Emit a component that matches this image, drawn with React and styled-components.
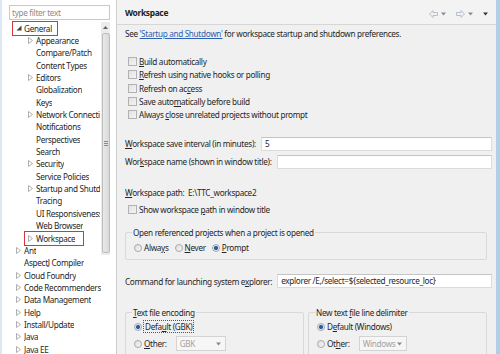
import React from 'react';
import styled, { createGlobalStyle } from 'styled-components';

const Global = createGlobalStyle`
  html, body { margin: 0; padding: 0; }
  body {
    width: 500px; height: 354px; overflow: hidden; background: #fff;
    font-family: "Noto Sans", "Open Sans", sans-serif;
  }
`;

const Window = styled.div`
  display: flex;
  width: 500px;
  height: 354px;
  overflow: hidden;
  font-size: 8.2px;
  letter-spacing: -0.32px;
  color: #262626;
`;

/* ---------- left tree ---------- */
const Sidebar = styled.div`
  width: 114px;
  flex: none;
  background: #fff;
  border-left: 2px solid #dde8f4;
  border-right: 1px solid #cdcdcd;
  display: flex;
  flex-direction: column;
`;

const Filter = styled.div`
  margin: 5px 0 0 7px;
  width: 101px;
  height: 15px;
  box-sizing: border-box;
  border: 1px solid #c9c9c9;
  color: #8c8c8c;
  padding-left: 2px;
  line-height: 13px;
`;

const TreeArea = styled.div`
  position: relative;
  margin-top: 2px;
  flex: 1;
`;

const Row = styled.div`
  height: 12.35px;
  display: flex;
  align-items: center;
  padding-left: ${p => (p.$level ? 26 : 14)}px;
  white-space: nowrap;
`;

const Slot = styled.span`
  width: 8px;
  flex: none;
  display: inline-flex;
  align-items: center;
`;

const Label = styled.span`
  display: inline-block;
  overflow: hidden;
  white-space: nowrap;
  max-width: ${p => (p.$clip ? '64px' : 'none')};
`;

const Marked = styled.span`
  position: relative;
  display: inline-flex;
  align-items: center;
  &::before {
    content: '';
    position: absolute;
    left: ${p => p.$l}px;
    right: ${p => p.$r}px;
    top: -2px;
    bottom: -2px;
    border: 1.5px solid #d9343c;
  }
`;

const Scrollbar = styled.div`
  position: absolute;
  left: 99px;
  top: 0;
  width: 9px;
  height: 233px;
  background: #ececec;
  display: flex;
  flex-direction: column;
  align-items: center;
`;

const ScrollBtn = styled.div`
  height: 11px;
  display: flex;
  align-items: center;
  justify-content: center;
`;

const Thumb = styled.div`
  width: 8px;
  flex: 1;
  margin-bottom: 2px;
  box-sizing: border-box;
  border: 1px solid #bcbcbc;
  border-radius: 2px;
  background: linear-gradient(to right, #e9e9e9, #d9d9d9);
  display: flex;
  align-items: center;
  justify-content: center;
`;

const Grip = styled.div`
  width: 4px;
  height: 5px;
  background: repeating-linear-gradient(to bottom, #8a8a8a 0 1px, transparent 1px 2px);
`;

const Collapsed = () => (
  <svg width="5" height="7" viewBox="0 0 5 7">
    <polygon points="0.5,0.5 4.5,3.5 0.5,6.5" fill="#fff" stroke="#a6a6a6" strokeWidth="0.9" />
  </svg>
);
const Expanded = () => (
  <svg width="6" height="6" viewBox="0 0 6 6">
    <polygon points="5.5,0.5 5.5,5.5 0.5,5.5" fill="#404040" />
  </svg>
);

/* ---------- right page ---------- */
const Main = styled.div`
  flex: 1;
  background: #f0f0f0;
  border-right: 4px solid #b4cde8;
  display: flex;
  flex-direction: column;
  min-width: 0;
`;

const Header = styled.div`
  height: 24px;
  flex: none;
  display: flex;
  align-items: center;
  justify-content: space-between;
  padding: 0 8px 0 8px;
  border-bottom: 1px solid #d6d6d6;
  background: #f3f3f3;
`;

const Title = styled.div`
  font-weight: bold;
  font-size: 8.4px;
  color: #222;
`;

const Nav = styled.div`
  display: flex;
  align-items: center;
  gap: 3px;
  margin-top: 4px;
`;

const Body = styled.div`
  padding: 0 4px 0 8px;
  display: flex;
  flex-direction: column;
`;

const Line = styled.div`
  line-height: 13px;
  height: 13px;
  white-space: nowrap;
  margin-top: ${p => p.$mt || 0}px;
`;

const Link = styled.span`
  color: #2d62b3;
  text-decoration: underline;
`;

const U = styled.span`
  text-decoration: underline;
`;

const CheckRow = styled.div`
  display: flex;
  align-items: center;
  height: 13.3px;
  margin-top: ${p => p.$mt || 0}px;
  padding-left: 3px;
  gap: 2px;
  white-space: nowrap;
`;

const Box = styled.span`
  width: 9px;
  height: 9px;
  box-sizing: border-box;
  border: 1px solid #b2b2b2;
  background: linear-gradient(135deg, #e2e2e2, #f4f4f4);
  flex: none;
`;

const FieldRow = styled.div`
  display: flex;
  align-items: center;
  gap: 5px;
  height: 15px;
  margin-top: ${p => p.$mt || 0}px;
  white-space: nowrap;
`;

const Input = styled.div`
  flex: 1;
  height: 14px;
  box-sizing: border-box;
  background: #fff;
  border: 1px solid #dcdcdc;
  border-top-color: #c4c4c4;
  padding-left: 3px;
  line-height: 12px;
  overflow: hidden;
  white-space: nowrap;
`;

const Group = styled.fieldset`
  margin: ${p => p.$mt || 0}px ${p => p.$mr || 0}px 0 0;
  padding: 0 0 0 8px;
  border: 1px solid #d9d9d9;
  border-radius: 2px;
  min-width: 0;
  flex: ${p => (p.$flex ? 1 : 'none')};
  height: ${p => p.$h}px;
  box-sizing: border-box;
`;

const Legend = styled.legend`
  padding: 0 1px;
  margin-left: -2px;
  line-height: 13px;
  white-space: nowrap;
`;

const RadioLine = styled.div`
  display: flex;
  align-items: center;
  height: ${p => p.$h || 15}px;
  gap: 6px;
  white-space: nowrap;
`;

const RadioItem = styled.span`
  display: inline-flex;
  align-items: center;
  gap: 2px;
`;

const Radio = styled.span`
  width: 8px;
  height: 8px;
  border-radius: 50%;
  box-sizing: border-box;
  border: 1px solid #a9a9a9;
  background: ${p =>
    p.$on
      ? 'radial-gradient(circle, #2d5f9e 0 1.8px, #dfe8f2 2.3px)'
      : 'linear-gradient(135deg, #dedede, #f6f6f6)'};
  flex: none;
`;

const Focus = styled.span`
  outline: 1px dotted #555;
  outline-offset: 0px;
  padding: 0 1px;
`;

const Combo = styled.span`
  display: inline-flex;
  align-items: center;
  justify-content: space-between;
  width: ${p => p.$w}px;
  height: 15px;
  box-sizing: border-box;
  border: 1px solid #d3d3d3;
  background: #f6f6f6;
  color: #a2a2a2;
  padding: 0 4px 0 3px;
  margin-left: 3px;
`;

const BottomGroups = styled.div`
  display: flex;
  gap: 4px;
  margin-top: 17px;
  padding-right: 5px;
`;

const NavArrow = ({ dir }) => (
  <svg width="9" height="8" viewBox="0 0 9 8">
    <polygon
      points={dir === 'l' ? '0.5,4 4,0.5 4,2.5 8.5,2.5 8.5,5.5 4,5.5 4,7.5' : '8.5,4 5,0.5 5,2.5 0.5,2.5 0.5,5.5 5,5.5 5,7.5'}
      fill="#eef2f6"
      stroke="#aab4be"
      strokeWidth="0.8"
    />
  </svg>
);
const Caret = ({ dark }) => (
  <svg width="5" height="4" viewBox="0 0 5 4">
    <polygon points="0,0.5 5,0.5 2.5,3.5" fill={dark ? '#333' : '#8a8a8a'} />
  </svg>
);

const tree = [
  { t: 'Appearance', l: 1, a: true },
  { t: 'Compare/Patch', l: 1 },
  { t: 'Content Types', l: 1 },
  { t: 'Editors', l: 1, a: true },
  { t: 'Globalization', l: 1 },
  { t: 'Keys', l: 1 },
  { t: 'Network Connections', l: 1, a: true, clip: true },
  { t: 'Notifications', l: 1 },
  { t: 'Perspectives', l: 1 },
  { t: 'Search', l: 1 },
  { t: 'Security', l: 1, a: true },
  { t: 'Service Policies', l: 1 },
  { t: 'Startup and Shutdown', l: 1, a: true, clip: true },
  { t: 'Tracing', l: 1 },
  { t: 'UI Responsiveness', l: 1, clip: true },
  { t: 'Web Browser', l: 1 },
];
const tree2 = [
  { t: 'Ant', a: true },
  { t: 'AspectJ Compiler' },
  { t: 'Cloud Foundry', a: true },
  { t: 'Code Recommenders', a: true },
  { t: 'Data Management', a: true },
  { t: 'Help', a: true },
  { t: 'Install/Update', a: true },
  { t: 'Java', a: true },
  { t: 'Java EE', a: true },
];

export default function App() {
  return (
    <>
      <Global />
      <Window>
        <Sidebar>
          <Filter>type filter text</Filter>
          <TreeArea>
            <Row $level={0}>
              <Marked $l={-4} $r={-6}>
                <Slot><Expanded /></Slot>
                <Label>General</Label>
              </Marked>
            </Row>
            {tree.map(n => (
              <Row key={n.t} $level={n.l}>
                <Slot>{n.a && <Collapsed />}</Slot>
                <Label $clip={n.clip}>{n.t}</Label>
              </Row>
            ))}
            <Row $level={1}>
              <Marked $l={-4} $r={-9}>
                <Slot><Collapsed /></Slot>
                <Label>Workspace</Label>
              </Marked>
            </Row>
            {tree2.map(n => (
              <Row key={n.t} $level={0}>
                <Slot>{n.a && <Collapsed />}</Slot>
                <Label>{n.t}</Label>
              </Row>
            ))}
            <Scrollbar>
              <ScrollBtn>
                <svg width="5" height="3" viewBox="0 0 5 3"><polygon points="0,3 5,3 2.5,0" fill="#606060" /></svg>
              </ScrollBtn>
              <Thumb><Grip /></Thumb>
            </Scrollbar>
          </TreeArea>
        </Sidebar>

        <Main>
          <Header>
            <Title>Workspace</Title>
            <Nav>
              <NavArrow dir="l" />
              <Caret />
              <span style={{ width: 4 }} />
              <NavArrow dir="r" />
              <Caret />
              <span style={{ width: 4 }} />
              <Caret dark />
            </Nav>
          </Header>
          <Body>
            <Line $mt={2}>
              See <Link>'Startup and Shutdown'</Link> for workspace startup and shutdown preferences.
            </Line>
            <CheckRow $mt={15}><Box /><span><U>B</U>uild automatically</span></CheckRow>
            <CheckRow><Box /><span><U>R</U>efresh using native hooks or polling</span></CheckRow>
            <CheckRow><Box /><span>Refresh on ac<U>c</U>ess</span></CheckRow>
            <CheckRow><Box /><span>Save auto<U>m</U>atically before build</span></CheckRow>
            <CheckRow><Box /><span>Always <U>c</U>lose unrelated projects without prompt</span></CheckRow>

            <FieldRow $mt={15}>
              <span><U>W</U>orkspace save interval (in minutes):</span>
              <Input>5</Input>
            </FieldRow>
            <FieldRow $mt={3}>
              <span>Wor<U>k</U>space name (shown in window title):</span>
              <Input />
            </FieldRow>

            <Line $mt={17}><U>W</U>orkspace path:&nbsp; E:\TTC_workspace2</Line>
            <CheckRow $mt={3}><Box /><span>Show workspace <U>p</U>ath in window title</span></CheckRow>

            <Group $mt={10} $mr={5} $h={34}>
              <Legend>Open referenced projects when a project is opened</Legend>
              <RadioLine $h={18}>
                <RadioItem><Radio /><span>Alwa<U>y</U>s</span></RadioItem>
                <RadioItem><Radio /><span><U>N</U>ever</span></RadioItem>
                <RadioItem><Radio $on /><span><U>P</U>rompt</span></RadioItem>
              </RadioLine>
            </Group>

            <FieldRow $mt={14}>
              <span>Command for launching system e<U>x</U>plorer:</span>
              <Input>explorer /E,/select=${'{'}selected_resource_loc{'}'}</Input>
            </FieldRow>

            <BottomGroups>
              <Group $flex $h={62}>
                <Legend><U>T</U>ext file encoding</Legend>
                <RadioLine $h={16}>
                  <RadioItem><Radio $on /><Focus>Defa<U>u</U>lt (GBK)</Focus></RadioItem>
                </RadioLine>
                <RadioLine $h={18}>
                  <RadioItem><Radio /><span><U>O</U>ther:</span></RadioItem>
                  <Combo $w={50}><span>GBK</span><Caret /></Combo>
                </RadioLine>
              </Group>
              <Group $flex $h={62}>
                <Legend>New text <U>f</U>ile line delimiter</Legend>
                <RadioLine $h={16}>
                  <RadioItem><Radio $on /><span>D<U>e</U>fault (Windows)</span></RadioItem>
                </RadioLine>
                <RadioLine $h={18}>
                  <RadioItem><Radio /><span>Ot<U>h</U>er:</span></RadioItem>
                  <Combo $w={48}><span>Windows</span><Caret /></Combo>
                </RadioLine>
              </Group>
            </BottomGroups>
          </Body>
        </Main>
      </Window>
    </>
  );
}
